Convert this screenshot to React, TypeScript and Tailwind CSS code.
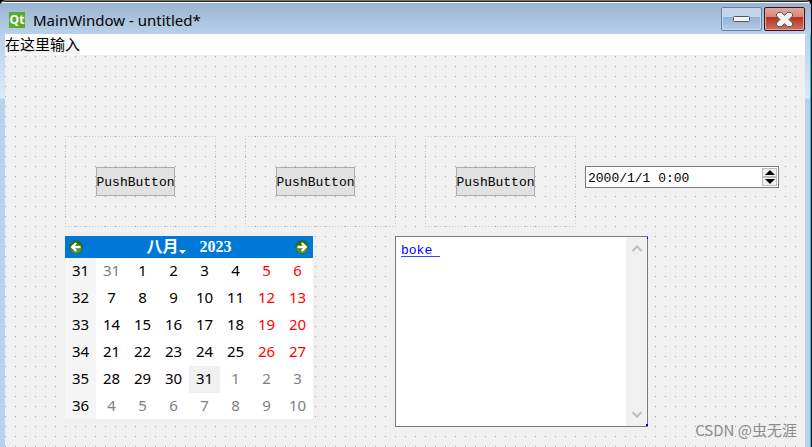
import { useState } from 'react'

interface CalendarRow {
  week: number
  days: number[]
}

const rows: CalendarRow[] = [
  { week: 31, days: [31, 1, 2, 3, 4, 5, 6] },
  { week: 32, days: [7, 8, 9, 10, 11, 12, 13] },
  { week: 33, days: [14, 15, 16, 17, 18, 19, 20] },
  { week: 34, days: [21, 22, 23, 24, 25, 26, 27] },
  { week: 35, days: [28, 29, 30, 31, 1, 2, 3] },
  { week: 36, days: [4, 5, 6, 7, 8, 9, 10] },
]

const groups = ['group1', 'group2', 'group3']

const isOtherMonth = (row: number, day: number) =>
  (row === 0 && day > 20) || (row >= 4 && day < 20)

function QtLogo() {
  return (
    <span className="flex h-4 w-4 items-center justify-center bg-[#5caa2c] font-['Open_Sans',sans-serif] text-[12px] leading-none font-bold text-white">
      Qt
    </span>
  )
}

function TitleBar() {
  return (
    <header className="flex h-[31px] shrink-0 items-start justify-between bg-linear-to-b from-[#99b4d1] to-[#b9d1ea] pr-[6px] pl-[9px]">
      <div className="flex items-center gap-2 pt-[7px]">
        <QtLogo />
        <h1 className="font-['Noto_Sans',sans-serif] text-[15px] leading-5 text-black">
          MainWindow - untitled*
        </h1>
      </div>
      <div className="flex gap-[2px] pt-1">
        <button
          aria-label="Minimize"
          className="flex h-6 w-[41px] items-center justify-center rounded-xs border border-[#6680a0] bg-[linear-gradient(#c3d5e8_0_42%,#93b1d2_42%,#b5cee8)] inset-ring inset-ring-[#c6d9ec]"
        >
          <svg width="17" height="6" viewBox="0 0 17 6">
            <rect x="0.5" y="0.5" width="16" height="5" rx="1" fill="#f4f4f4" stroke="#535666" />
          </svg>
        </button>
        <button
          aria-label="Close"
          className="flex h-6 w-[41px] items-center justify-center rounded-xs border border-[#43101f] bg-[linear-gradient(#e5a79c,#d88474_42%,#b33320_42%,#d0705a)] inset-ring inset-ring-[#e0a79f]"
        >
          <svg width="17" height="15" viewBox="0 0 17 15">
            <path
              d="M2 .5h3.500l3 3 3-3H15l1.500 1.500v2L13 7.500l3.500 3.500v2L15 14.500h-3.500l-3-3-3 3H2L.5 13v-2L4 7.500.5 4V2z"
              fill="#f2f2f2"
              stroke="#535666"
              strokeLinejoin="round"
            />
          </svg>
        </button>
      </div>
    </header>
  )
}

function PushButtonGroup() {
  return (
    <div className="flex h-[91px] w-[151px] shrink-0 items-center justify-center bg-[repeating-linear-gradient(to_right,#c8c8c8_0_1px,transparent_1px_3px),repeating-linear-gradient(to_right,#c8c8c8_0_1px,transparent_1px_3px),repeating-linear-gradient(to_bottom,#c8c8c8_0_1px,transparent_1px_3px),repeating-linear-gradient(to_bottom,#c8c8c8_0_1px,transparent_1px_3px)] bg-[size:100%_1px,100%_1px,1px_100%,1px_100%] bg-[position:top,bottom,left,right] bg-no-repeat pr-[10px]">
      <button className="flex h-[29px] w-[79px] items-center justify-center border border-[#adadad] bg-[#e1e1e1] pt-[2px] font-['Liberation_Mono',monospace] text-[13px] whitespace-nowrap text-black">
        PushButton
      </button>
    </div>
  )
}

function DateTimeEdit() {
  const [value, setValue] = useState('2000/1/1 0:00')

  return (
    <div className="mt-[30px] flex h-[22px] w-[194px] shrink-0 border border-[#7a7a7a] bg-white">
      <input
        aria-label="Date and time"
        value={value}
        onChange={(e) => setValue(e.target.value)}
        className="min-w-0 flex-1 pt-[3px] pl-[2px] font-['Liberation_Mono',monospace] text-[13px] text-black outline-none"
      />
      <div className="m-px flex w-[15px] flex-col">
        <button aria-label="Step up" className="flex flex-1 items-center justify-center border border-[#bcbcbc] bg-[#f0f0f0]">
          <svg width="10" height="5" viewBox="0 0 10 5"><path d="M5 0l5 5H0z" /></svg>
        </button>
        <button aria-label="Step down" className="flex flex-1 items-center justify-center border border-[#bcbcbc] bg-[#f0f0f0]">
          <svg width="10" height="5" viewBox="0 0 10 5"><path d="M0 0h10L5 5z" /></svg>
        </button>
      </div>
    </div>
  )
}

function NavArrow({ direction }: { direction: 'left' | 'right' }) {
  return (
    <svg width="14" height="14" viewBox="0 0 14 14">
      <defs>
        <linearGradient id={`nav-${direction}`} x1="0" y1="0" x2="0" y2="1">
          <stop offset="0" stopColor="#2c6410" />
          <stop offset="0.500" stopColor="#397a19" />
          <stop offset="1" stopColor="#68a83a" />
        </linearGradient>
      </defs>
      <circle cx="7" cy="7" r="6.500" fill={`url(#nav-${direction})`} stroke="#2d6a1d" strokeWidth="0.700" />
      <path
        d={direction === 'left' ? 'M11.500 7H4M7.200 3 3.200 7l4 4' : 'M2.500 7H10M6.800 3l4 4-4 4'}
        fill="none"
        stroke="#fff"
        strokeWidth="2.300"
      />
    </svg>
  )
}

function Calendar() {
  return (
    <div className="w-[248px] shrink-0 bg-white">
      <div className="flex h-[22px] items-center justify-between bg-[#0078d7] px-1 font-['Liberation_Serif','Noto_Sans_CJK_SC',serif] text-[16px] leading-5 font-bold text-white">
        <button aria-label="Previous month"><NavArrow direction="left" /></button>
        <div className="flex items-center gap-[14px]">
          <button className="flex items-end">
            八月
            <svg width="7" height="4" viewBox="0 0 7 4" className="mb-[3px]">
              <path d="M0 0h7L3.500 4z" fill="#fff" />
            </svg>
          </button>
          <button>2023</button>
        </div>
        <button aria-label="Next month"><NavArrow direction="right" /></button>
      </div>
      <table className="w-full table-fixed border-collapse text-center font-['Noto_Sans',sans-serif] text-[15px] leading-6 text-black">
        <tbody>
          {rows.map((row, r) => (
            <tr key={row.week} className={r === rows.length - 1 ? 'h-[26px]' : 'h-[27px]'}>
              <th scope="row" className="bg-[#f5f5f5] p-0 align-top font-normal">{row.week}</th>
              {row.days.map((day, i) => {
                let color = 'text-black'
                if (isOtherMonth(r, day)) color = 'text-[#808080]'
                else if (i > 4) color = 'text-[#ff0000]'
                const selected = r === 4 && day === 31

                return (
                  <td key={day} className={`p-0 align-top ${color} ${selected ? 'bg-[#f0f0f0]' : ''}`}>
                    {day}
                  </td>
                )
              })}
            </tr>
          ))}
        </tbody>
      </table>
    </div>
  )
}

function TextBrowser() {
  return (
    <div className="relative flex h-[191px] w-[253px] shrink-0 justify-between border border-[#7a7a7a] bg-white">
      <a
        href="#boke"
        className="self-start pt-1 pl-[5px] font-['Liberation_Mono',monospace] text-[13px] leading-5 whitespace-pre text-[#0000ff]"
      >
        <span className="text-[#0000ff] underline decoration-[#4040ff] decoration-1 underline-offset-2">{'boke '}</span>
      </a>
      <div className="flex w-[21px] flex-col items-center justify-between bg-[#f0f0f0] py-[8px]">
        <svg width="10" height="7" viewBox="0 0 10 7">
          <path d="M.5 6 5 1.500 9.500 6" fill="none" stroke="#bfbfbf" strokeWidth="2" />
        </svg>
        <svg width="10" height="7" viewBox="0 0 10 7">
          <path d="M.5 1 5 5.500 9.500 1" fill="none" stroke="#bfbfbf" strokeWidth="2" />
        </svg>
      </div>
      <span className="absolute -right-px top-0 h-[2px] w-px bg-[#0000ff]" />
      <span className="absolute -right-px bottom-0 h-[2px] w-[2px] bg-[#0000c0]" />
    </div>
  )
}

export default function App() {
  return (
    <div className="bg-black">
      <div className="relative flex min-h-screen flex-col overflow-hidden rounded-t-md border-t border-r border-t-[#727272] border-r-black bg-white">
        <div className="mb-px h-px shrink-0 bg-[#222222]" />
        <TitleBar />
        <div className="flex flex-1">
          <div className="w-[5px] shrink-0 bg-[linear-gradient(#b9d1ea,#dce9f7_64px,#b9d1ea_65px)]" />
          <main className="flex min-w-0 flex-1 flex-col">
            <nav className="flex h-[21px] items-start bg-white">
              <button className="h-5 bg-linear-to-b from-white to-[#f0f0f0] font-['Noto_Sans_CJK_SC',sans-serif] text-[15px] leading-[18px] text-black">
                在这里输入
              </button>
            </nav>
            <div className="flex flex-1 flex-col gap-[9px] bg-[#f0f0f0] bg-[linear-gradient(to_right,transparent_1px,#f0f0f0_1px),linear-gradient(#a0a0a0_1px,transparent_1px)] bg-[size:10px_10px] bg-[position:0_1px] pt-[81px] pb-5 pl-[60px]">
              <div className="flex items-start gap-[9px]">
                <div className="flex gap-[29px]">
                  {groups.map((group) => (
                    <PushButtonGroup key={group} />
                  ))}
                </div>
                <DateTimeEdit />
              </div>
              <div className="flex items-start gap-[82px]">
                <Calendar />
                <TextBrowser />
              </div>
            </div>
          </main>
          <div className="w-[5px] shrink-0 bg-[linear-gradient(#b9d1ea,#dce9f7_64px,#b9d1ea_65px)]" />
          <div className="w-px shrink-0 bg-[#00c8f0]" />
        </div>
        <span className="absolute right-[14px] bottom-[7px] font-['Noto_Sans_CJK_SC',sans-serif] text-[15px] leading-5 text-[#8c8c8c]">
          CSDN @虫无涯
        </span>
      </div>
    </div>
  )
}
